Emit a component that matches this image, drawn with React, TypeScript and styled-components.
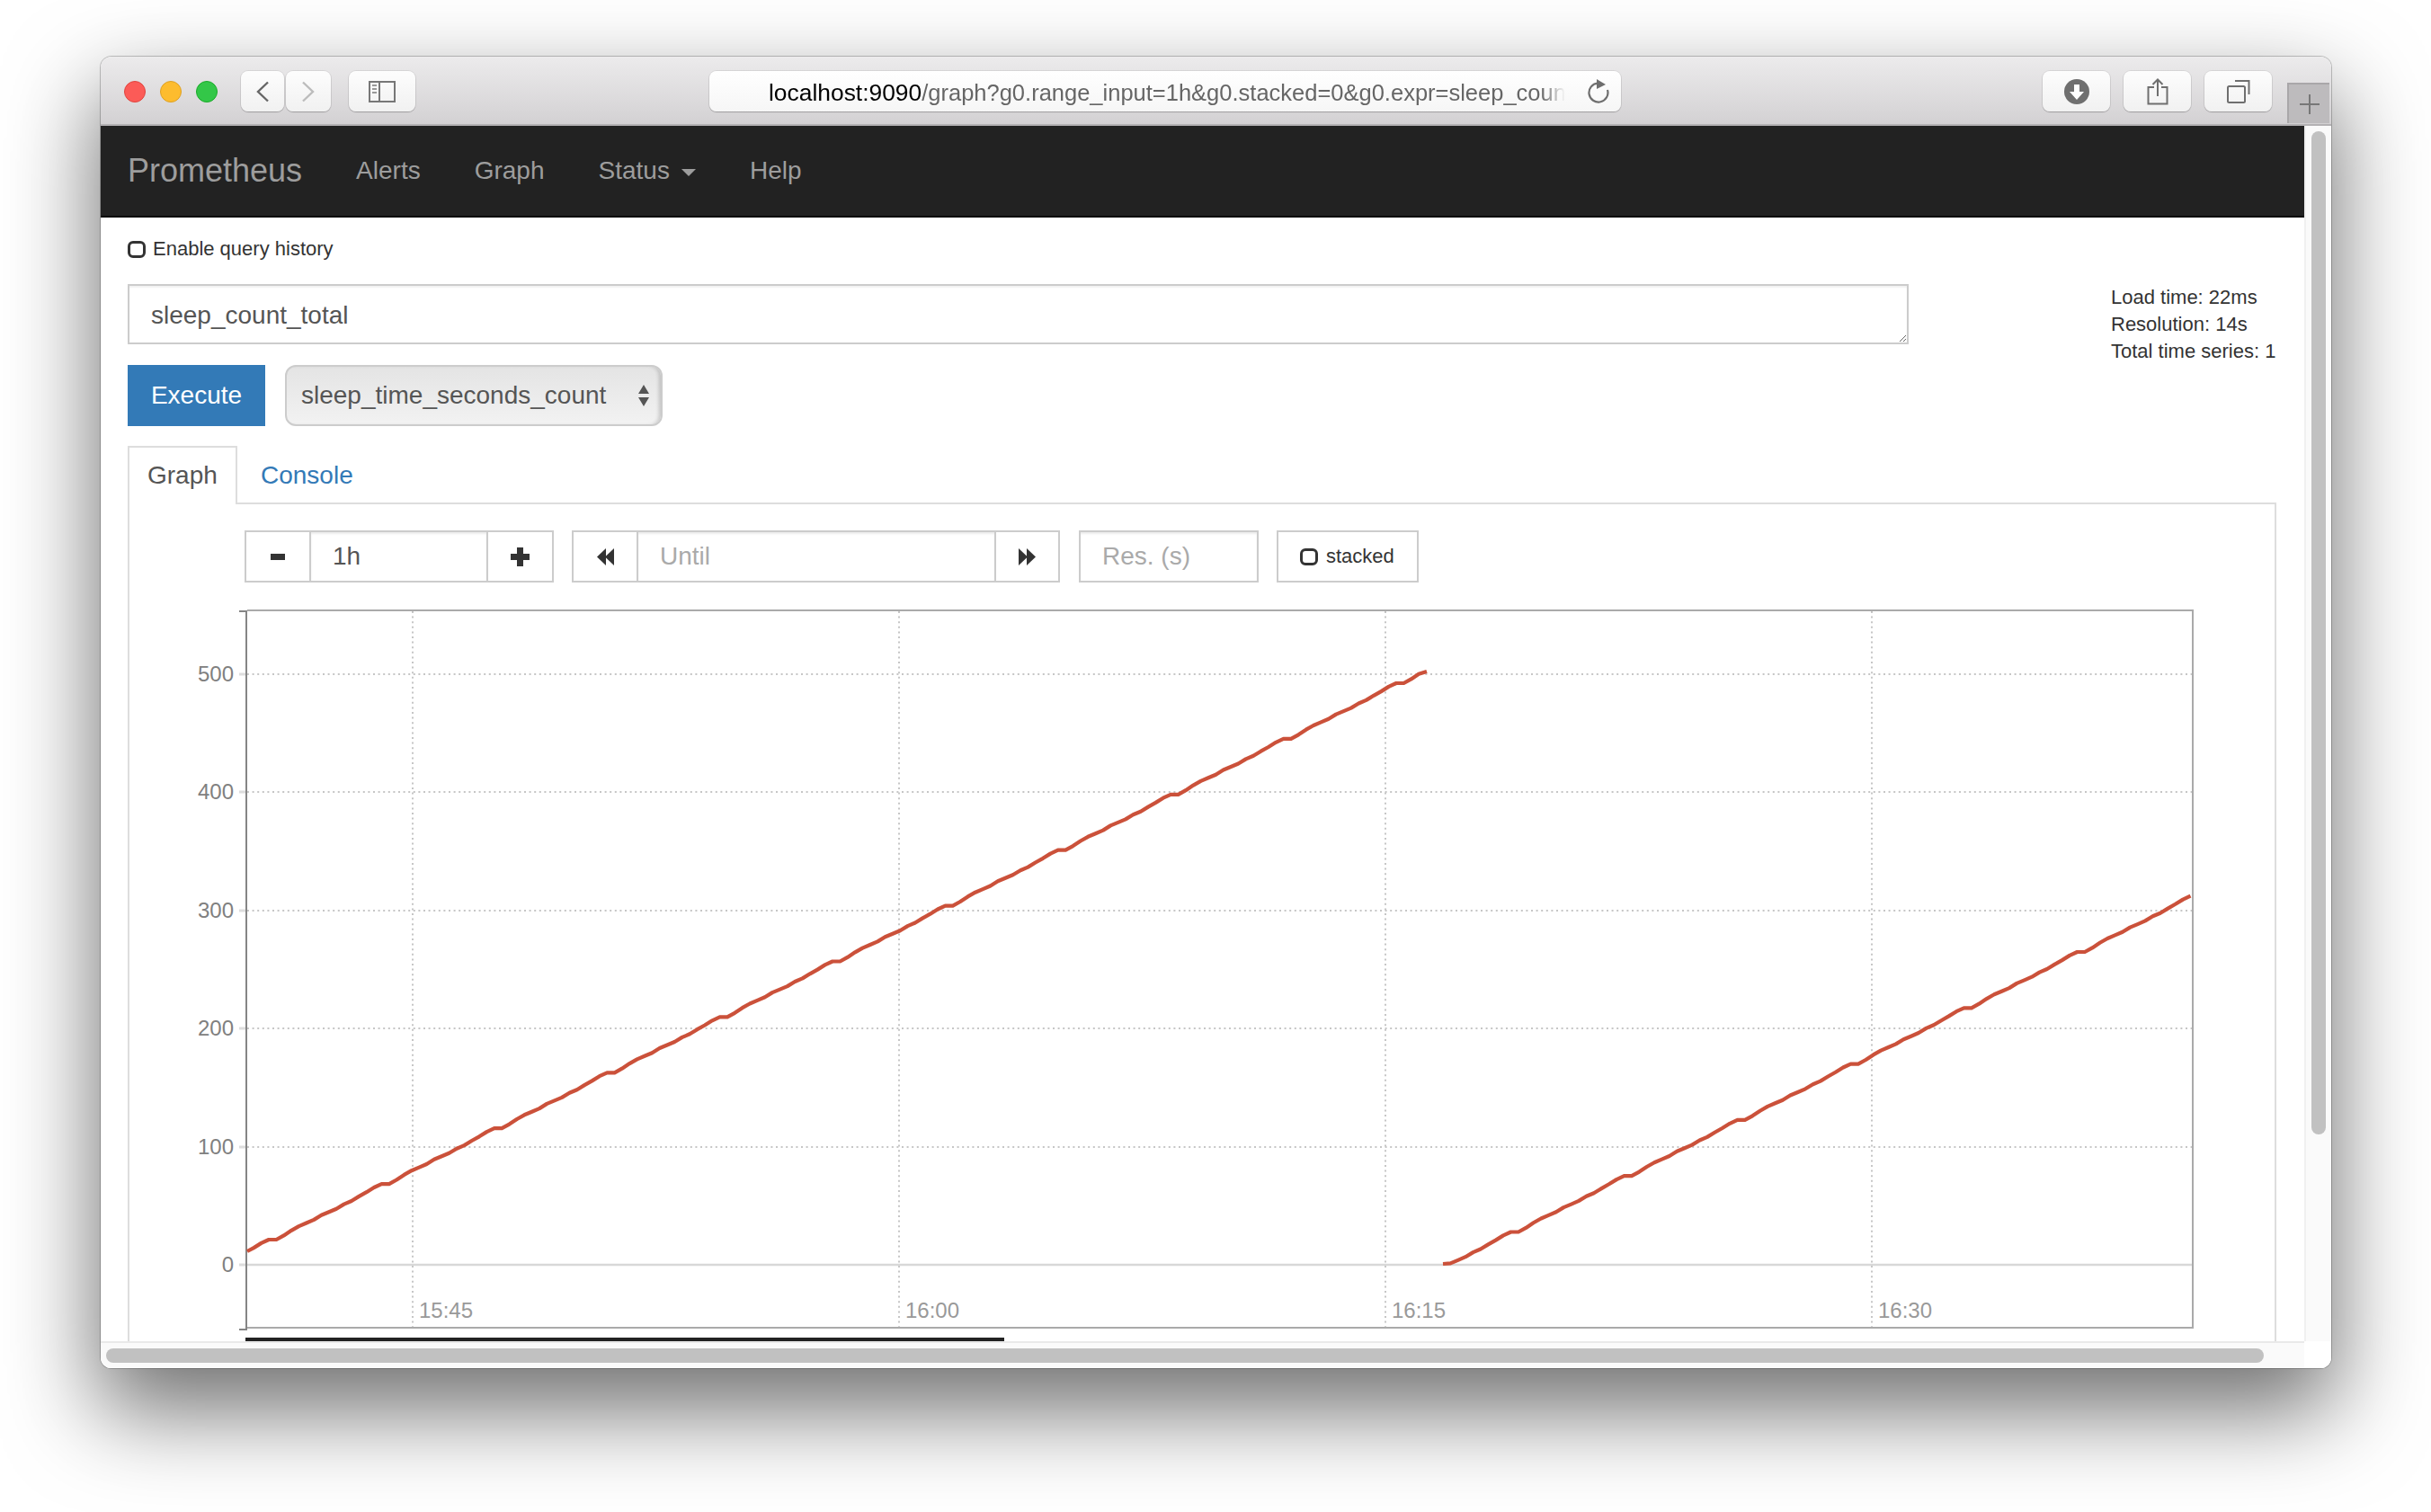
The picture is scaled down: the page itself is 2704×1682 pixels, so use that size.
import * as React from 'react';
import styled, {createGlobalStyle} from 'styled-components';

const GlobalStyle = createGlobalStyle`
    html, body {
        margin: 0;
        padding: 0;
        background: #fff;
    }
    body {
        font-family: "Liberation Sans", Arial, sans-serif;
        color: #333;
    }
    * {
        box-sizing: border-box;
    }
`

const Page = styled.div`
    width: 2704px;
    height: 1682px;
    padding: 63px 0 0 112px;
    overflow: hidden;
`
const Win = styled.div`
    width: 2481px;
    height: 1459px;
    display: flex;
    flex-direction: column;
    border-radius: 12px;
    overflow: hidden;
    box-shadow: 0 0 0 1px rgba(0, 0, 0, 0.22), 0 44px 100px 4px rgba(0, 0, 0, 0.56);
`

/* safari chrome */
const Toolbar = styled.div`
    height: 77px;
    flex: none;
    display: flex;
    align-items: flex-start;
    padding: 16px 0 0 26px;
    background: linear-gradient(#ecebec, #d3d1d3);
    border-bottom: 2px solid #b3b1b3;
`
const Light = styled.span<{$color: string; $edge: string}>`
    width: 24px;
    height: 24px;
    margin: 11px 16px 0 0;
    border-radius: 50%;
    background: ${p => p.$color};
    border: 1px solid ${p => p.$edge};
    flex: none;
`
const ChromeButton = styled.div<{$w: number; $ml: number}>`
    width: ${p => p.$w}px;
    height: 45px;
    margin-left: ${p => p.$ml}px;
    flex: none;
    display: flex;
    align-items: center;
    justify-content: center;
    background: linear-gradient(#fdfdfd, #f1f1f1);
    border-radius: 8px;
    box-shadow: 0 0 0 1px rgba(0, 0, 0, 0.07), 0 1px 1px rgba(0, 0, 0, 0.2);
`
const UrlBar = styled.div`
    width: 1014px;
    height: 45px;
    margin-left: 327px;
    flex: none;
    display: flex;
    align-items: center;
    padding-left: 66px;
    background: linear-gradient(#fff, #f6f6f6);
    border-radius: 8px;
    box-shadow: 0 0 0 1px rgba(0, 0, 0, 0.07), 0 1px 1px rgba(0, 0, 0, 0.2);
`
const UrlText = styled.div`
    width: 886px;
    flex: none;
    padding-top: 3px;
    overflow: hidden;
    white-space: nowrap;
    font-size: 25.5px;
    line-height: 42px;
    color: #666;
    -webkit-mask-image: linear-gradient(to right, #000 97%, transparent);
    mask-image: linear-gradient(to right, #000 97%, transparent);
    b {
        font-weight: normal;
        font-size: 26.4px;
        color: #000;
    }
`
const Reload = styled.svg`
    margin-left: 24px;
    flex: none;
`
const NewTab = styled.div`
    width: 47px;
    height: 45px;
    margin: 13px 0 0 17px;
    flex: none;
    display: flex;
    align-items: center;
    justify-content: center;
    background: #bdbbbd;
    border-left: 2px solid #a9a7a9;
    border-top: 2px solid #a9a7a9;
`

/* page + scrollbars */
const Frame = styled.div`
    flex: 1;
    min-height: 0;
    display: grid;
    grid-template-columns: 2451px 30px;
    grid-template-rows: 1352px 30px;
    background: #fff;
`
const Viewport = styled.div`
    overflow: hidden;
    background: #fff;
`
const VTrack = styled.div`
    background: #fafafa;
    border-left: 2px solid #f0f0f0;
    padding: 6px 6px 0 6px;
`
const VThumb = styled.div`
    width: 16px;
    height: 1116px;
    border-radius: 8px;
    background: #c1c1c1;
`
const HTrack = styled.div`
    background: #fafafa;
    border-top: 2px solid #e9e9e9;
    padding: 6px 0 0 6px;
`
const HThumb = styled.div`
    width: 2400px;
    height: 16px;
    border-radius: 8px;
    background: #c1c1c1;
`
const Corner = styled.div`
    background: #fff;
`

/* prometheus navbar */
const Navbar = styled.div`
    height: 102px;
    display: flex;
    align-items: center;
    background: #222;
    border-bottom: 2px solid #080808;
    color: #9d9d9d;
`
const Brand = styled.div`
    font-size: 36px;
    padding: 0 30px;
`
const NavLink = styled.div`
    font-size: 28px;
    padding: 0 30px;
    display: flex;
    align-items: center;
`
const Caret = styled.span`
    width: 0;
    height: 0;
    margin-left: 13px;
    margin-top: 4px;
    border-top: 8px solid #9d9d9d;
    border-left: 8px solid transparent;
    border-right: 8px solid transparent;
`

const Container = styled.div`
    padding: 0 31px 0 30px;
`
const CheckBox = styled.span`
    width: 20px;
    height: 19px;
    flex: none;
    border: 3.5px solid #333;
    border-radius: 6px;
    background: #fff;
`
const HistoryRow = styled.label`
    height: 74px;
    padding-bottom: 4px;
    display: flex;
    align-items: center;
    gap: 8px;
    font-size: 22px;
    color: #333;
`
const QueryRow = styled.div`
    display: flex;
    align-items: flex-start;
    height: 67px;
`
const QueryBox = styled.textarea`
    width: 1981px;
    height: 67px;
    flex: none;
    display: block;
    padding: 18px 24px;
    border: 2px solid #ccc;
    border-radius: 0;
    outline: none;
    font-family: inherit;
    font-size: 28px;
    line-height: 30px;
    color: #555;
    box-shadow: inset 0 2px 2px rgba(0, 0, 0, 0.06);
`
const Stats = styled.div`
    margin-left: 225px;
    font-size: 22px;
    line-height: 30px;
    color: #333;
    white-space: nowrap;
`
const ExecuteRow = styled.div`
    display: flex;
    gap: 22px;
    margin-top: 23px;
`
const ExecuteButton = styled.div`
    width: 153px;
    height: 68px;
    display: flex;
    align-items: center;
    justify-content: center;
    font-size: 28px;
    color: #fff;
    background: #337ab7;
`
const MetricSelect = styled.div`
    width: 420px;
    height: 68px;
    display: flex;
    align-items: center;
    justify-content: space-between;
    padding: 0 12px 0 16px;
    font-size: 28px;
    color: #555;
    background: linear-gradient(#e4e4e4, #f2f2f2);
    border: 2px solid #ccc;
    border-radius: 12px;
    box-shadow: inset -4px 0 4px -2px rgba(0, 0, 0, 0.18);
`

/* tabs */
const TabList = styled.div`
    display: flex;
    height: 65px;
    margin-top: 22px;
    border-bottom: 2px solid #ddd;
`
const ActiveTab = styled.div`
    width: 122px;
    height: 65px;
    padding: 15px 0 0 20px;
    font-size: 28px;
    line-height: 32px;
    color: #555;
    background: #fff;
    border: 2px solid #ddd;
    border-bottom: none;
`
const Tab = styled.div`
    padding: 17px 0 0 26px;
    font-size: 28px;
    line-height: 32px;
    color: #337ab7;
`
const TabPane = styled.div`
    height: 933px;
    padding: 29px 0 0 128px;
    border-left: 2px solid #ddd;
    border-right: 2px solid #ddd;
`
const Controls = styled.div`
    display: flex;
    gap: 20px;
    height: 58px;
`
const Group = styled.div`
    display: flex;
`
const IconButton = styled.div<{$w: number; $join?: boolean}>`
    width: ${p => p.$w}px;
    margin-left: ${p => (p.$join ? -2 : 0)}px;
    display: flex;
    align-items: center;
    justify-content: center;
    border: 2px solid #ccc;
    background: #fff;
    position: relative;
`
const Field = styled.input<{$w: number; $join?: boolean; $ml?: number}>`
    width: ${p => p.$w}px;
    height: 58px;
    margin: 0 0 0 ${p => (p.$join ? -2 : p.$ml || 0)}px;
    padding: 0 24px;
    border: 2px solid #ccc;
    border-radius: 0;
    outline: none;
    font-family: inherit;
    font-size: 28px;
    color: #555;
    box-shadow: inset 0 2px 2px rgba(0, 0, 0, 0.075);
    &::placeholder {
        color: #aaa;
        opacity: 1;
    }
`
const StackedButton = styled.div`
    width: 158px;
    display: flex;
    align-items: center;
    gap: 9px;
    padding-left: 24px;
    border: 2px solid #ccc;
    font-size: 22px;
    color: #333;
`
const ChartSvg = styled.svg`
    display: block;
    margin: 24px 0 0 -52px;
`
const AxisText = styled.text<{$color: string}>`
    font-family: "Liberation Sans", Arial, sans-serif;
    font-size: 24px;
    fill: ${p => p.$color};
`
const RangeBar = styled.div`
    width: 844px;
    height: 4px;
    margin: 4px 0 0 1px;
    background: #222;
`

// one period of the counter, px the line climbs per 14s step (the flat step is the first one)
const STEP_DROPS = [0, 4.6, 5.6, 4.8, 3.6, 3.6, 5.2, 3.5, 3.6, 5.1, 3.6, 5.1, 4.8, 5.2, 3.9];
const DROP_SUM = STEP_DROPS.reduce((a, b) => a + b, 0);

const buildLine = (plateauX: number, plateauY: number, period: number, rise: number, fromX: number, toX: number) => {
    const step = period / STEP_DROPS.length;
    const pts: string[] = [];
    // walk back a whole period so the line can start mid way
    let x = plateauX - period * 2;
    let y = plateauY + rise * 2;
    const total = Math.ceil((toX - x) / step) + 2;
    for (let i = 0; i < total; i++) {
        const drop = STEP_DROPS[i % STEP_DROPS.length] * (rise / DROP_SUM);
        if (x >= fromX - 0.01 && x <= toX) {
            pts.push(`${x.toFixed(1)},${y.toFixed(1)}`);
        }
        x += step;
        y -= drop;
    }
    return pts.join(' ');
};

const FIRST_RUN = '275,1392 ' + buildLine(299, 1379, 125.4, 61.9, 278, 1585) + ' 1587,747';
const SECOND_RUN = '1605,1406 ' + buildLine(1680.5, 1370.5, 126, 62.3, 1606, 2438);

const Y_TICKS = [
    {label: '500', y: 750},
    {label: '400', y: 881},
    {label: '300', y: 1013},
    {label: '200', y: 1144},
    {label: '100', y: 1276},
];
const X_TICKS = [
    {label: '15:45', x: 459},
    {label: '16:00', x: 1000},
    {label: '16:15', x: 1541},
    {label: '16:30', x: 2082},
];

const Chart = () => (
    <ChartSvg width={2225} height={812} viewBox="220 672 2225 812">
        {Y_TICKS.map(t => (
            <g key={t.label}>
                <line x1={275} x2={2438} y1={t.y} y2={t.y} stroke="#c6c6c6" strokeWidth={2} strokeDasharray="2 3.6" />
                <line x1={266} x2={274} y1={t.y} y2={t.y} stroke="#ddd" strokeWidth={3} />
                <AxisText $color="#808080" x={260} y={t.y + 8} textAnchor="end">{t.label}</AxisText>
            </g>
        ))}
        {X_TICKS.map(t => (
            <g key={t.label}>
                <line x1={t.x} x2={t.x} y1={680} y2={1476} stroke="#c6c6c6" strokeWidth={2} strokeDasharray="2 3.6" />
                <AxisText $color="#999" x={t.x + 7} y={1466}>{t.label}</AxisText>
            </g>
        ))}
        <line x1={266} x2={274} y1={1407} y2={1407} stroke="#ddd" strokeWidth={3} />
        <line x1={275} x2={2438} y1={1407} y2={1407} stroke="#d8d8d8" strokeWidth={2.5} />
        <AxisText $color="#808080" x={260} y={1415} textAnchor="end">0</AxisText>
        <path d="M275 679H2439V1477H275" fill="none" stroke="#aaa" strokeWidth={2} />
        <path d="M266 680H274V1479H266" fill="none" stroke="#858585" strokeWidth={2} />
        <polyline points={FIRST_RUN} fill="none" stroke="#cb513a" strokeWidth={4.2} strokeLinejoin="round" />
        <polyline points={SECOND_RUN} fill="none" stroke="#cb513a" strokeWidth={4.2} strokeLinejoin="round" />
    </ChartSvg>
);

class App extends React.Component {
    render() {
        return (
            <>
                <GlobalStyle />
                <Page>
                    <Win>
                        <Toolbar>
                            <Light $color="#fc5b57" $edge="#e0443e" />
                            <Light $color="#fdbc2e" $edge="#dea123" />
                            <Light $color="#33c748" $edge="#1aab29" />
                            <ChromeButton $w={48} $ml={10}>
                                <svg width="16" height="24" viewBox="0 0 16 24"><path d="M14 1.5 3 12l11 10.5" fill="none" stroke="#666" strokeWidth="2.4" /></svg>
                            </ChromeButton>
                            <ChromeButton $w={50} $ml={2}>
                                <svg width="16" height="24" viewBox="0 0 16 24"><path d="M2 1.5 13 12 2 22.5" fill="none" stroke="#bcbcbc" strokeWidth="2.4" /></svg>
                            </ChromeButton>
                            <ChromeButton $w={74} $ml={20}>
                                <svg width="30" height="24" viewBox="0 0 30 24">
                                    <rect x="1" y="1" width="28" height="22" fill="none" stroke="#777" strokeWidth="2" />
                                    <path d="M12 1v22" stroke="#777" strokeWidth="2" />
                                    <path d="M4 5h5M4 9h5M4 13h5" stroke="#999" strokeWidth="2" />
                                </svg>
                            </ChromeButton>
                            <UrlBar>
                                <UrlText><b>localhost:9090</b>/graph?g0.range_input=1h&amp;g0.stacked=0&amp;g0.expr=sleep_count</UrlText>
                                <Reload width="26" height="30" viewBox="0 0 26 30">
                                    <path d="M12 5.6A10.5 10.5 0 1 0 23 13" fill="none" stroke="#6e6e6e" strokeWidth="2.2" />
                                    <path d="M11 1l10 6-10 5z" fill="#6e6e6e" />
                                </Reload>
                            </UrlBar>
                            <ChromeButton $w={75} $ml={469}>
                                <svg width="28" height="28" viewBox="0 0 28 28">
                                    <circle cx="14" cy="14" r="14" fill="#6f6f6f" />
                                    <path d="M11 6h6v8h5l-8 9-8-9h5z" fill="#fff" />
                                </svg>
                            </ChromeButton>
                            <ChromeButton $w={75} $ml={15}>
                                <svg width="24" height="30" viewBox="0 0 24 30">
                                    <path d="M8 10H1.5v18.5h21V10H16" fill="none" stroke="#6f6f6f" strokeWidth="2" />
                                    <path d="M12 20V2M6.5 7 12 1.5 17.5 7" fill="none" stroke="#6f6f6f" strokeWidth="2" />
                                </svg>
                            </ChromeButton>
                            <ChromeButton $w={75} $ml={15}>
                                <svg width="26" height="26" viewBox="0 0 26 26">
                                    <rect x="1" y="7" width="19" height="18" rx="1.5" fill="none" stroke="#6f6f6f" strokeWidth="2" />
                                    <path d="M9 1h15.5v15" fill="none" stroke="#6f6f6f" strokeWidth="2" />
                                </svg>
                            </ChromeButton>
                            <NewTab>
                                <svg width="24" height="24" viewBox="0 0 24 24"><path d="M12 1v22M1 12h22" stroke="#777" strokeWidth="2" /></svg>
                            </NewTab>
                        </Toolbar>
                        <Frame>
                            <Viewport>
                                <Navbar>
                                    <Brand>Prometheus</Brand>
                                    <NavLink>Alerts</NavLink>
                                    <NavLink>Graph</NavLink>
                                    <NavLink>Status<Caret /></NavLink>
                                    <NavLink>Help</NavLink>
                                </Navbar>
                                <Container>
                                    <HistoryRow><CheckBox />Enable query history</HistoryRow>
                                    <QueryRow>
                                        <QueryBox readOnly defaultValue="sleep_count_total" />
                                        <Stats>
                                            <div>Load time: 22ms</div>
                                            <div>Resolution: 14s</div>
                                            <div>Total time series: 1</div>
                                        </Stats>
                                    </QueryRow>
                                    <ExecuteRow>
                                        <ExecuteButton>Execute</ExecuteButton>
                                        <MetricSelect>
                                            sleep_time_seconds_count
                                            <svg width="14" height="26" viewBox="0 0 14 26">
                                                <path d="M7 1l6 10H1zM7 25l-6-10h12z" fill="#555" />
                                            </svg>
                                        </MetricSelect>
                                    </ExecuteRow>
                                    <TabList>
                                        <ActiveTab>Graph</ActiveTab>
                                        <Tab>Console</Tab>
                                    </TabList>
                                    <TabPane>
                                        <Controls>
                                            <Group>
                                                <IconButton $w={74}>
                                                    <svg width="16" height="7" viewBox="0 0 16 7"><path d="M0 0h16v7H0z" fill="#333" /></svg>
                                                </IconButton>
                                                <Field $w={199} $join readOnly value="1h" />
                                                <IconButton $w={75} $join>
                                                    <svg width="21" height="21" viewBox="0 0 21 21"><path d="M7 0h7v7h7v7h-7v7H7v-7H0V7h7z" fill="#333" /></svg>
                                                </IconButton>
                                            </Group>
                                            <Group>
                                                <IconButton $w={74}>
                                                    <svg width="19" height="19" viewBox="0 0 19 19"><path d="M10 0v19L0 9.5zM19 0v19L9 9.5z" fill="#333" /></svg>
                                                </IconButton>
                                                <Field $w={400} $join placeholder="Until" readOnly />
                                                <IconButton $w={73} $join>
                                                    <svg width="19" height="19" viewBox="0 0 19 19"><path d="M0 0v19l10-9.5zM9 0v19l10-9.5z" fill="#333" /></svg>
                                                </IconButton>
                                            </Group>
                                            <Field $w={200} $ml={1} placeholder="Res. (s)" readOnly />
                                            <StackedButton><CheckBox />stacked</StackedButton>
                                        </Controls>
                                        <Chart />
                                        <RangeBar />
                                    </TabPane>
                                </Container>
                            </Viewport>
                            <VTrack><VThumb /></VTrack>
                            <HTrack><HThumb /></HTrack>
                            <Corner />
                        </Frame>
                    </Win>
                </Page>
            </>
        );
    }
}

export default App;
